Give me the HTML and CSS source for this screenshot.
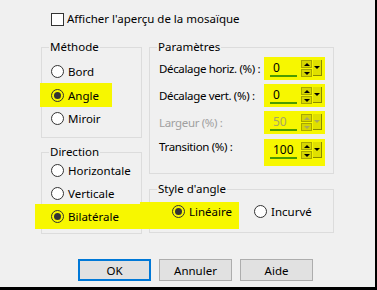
FILE: index.html
```html
<!DOCTYPE html>
<html lang="fr">
<head>
    <meta charset="UTF-8">
    <title>Mosaïque</title>
    <link rel="stylesheet" href="styles.css">
</head>
<body>
    <div class="dialog">
        <div class="check-row"><span class="checkbox"></span>Afficher l'aperçu de la mosaïque</div>

        <div class="main">
            <div class="col">
                <fieldset class="group methode">
                    <legend>Méthode</legend>
                    <div class="radio-row"><span class="radio"></span>Bord</div>
                    <div class="radio-row hl hl-angle"><span class="radio on"></span>Angle</div>
                    <div class="radio-row"><span class="radio"></span>Miroir</div>
                </fieldset>
                <fieldset class="group direction">
                    <legend>Direction</legend>
                    <div class="radio-row"><span class="radio"></span>Horizontale</div>
                    <div class="radio-row"><span class="radio"></span>Verticale</div>
                    <div class="radio-row hl hl-bilat"><span class="radio on"></span>Bilatérale</div>
                </fieldset>
            </div>

            <div class="col">
                <fieldset class="group params">
                    <legend>Paramètres</legend>
                    <div class="param-row">
                        <span class="label">Décalage horiz. (%) :</span>
                        <div class="spin">
                            <div class="field"><span class="value">0</span><span class="bar"></span></div>
                            <div class="arrows"><span class="arr up"></span><span class="arr down"></span></div>
                            <div class="drop"><span class="tri"></span></div>
                        </div>
                    </div>
                    <div class="param-row">
                        <span class="label">Décalage vert. (%) :</span>
                        <div class="spin">
                            <div class="field"><span class="value">0</span><span class="bar"></span></div>
                            <div class="arrows"><span class="arr up"></span><span class="arr down"></span></div>
                            <div class="drop"><span class="tri"></span></div>
                        </div>
                    </div>
                    <div class="param-row disabled">
                        <span class="label">Largeur (%) :</span>
                        <div class="spin">
                            <div class="field"><span class="value">50</span><span class="bar"></span></div>
                            <div class="arrows"><span class="arr up"></span><span class="arr down"></span></div>
                            <div class="drop"><span class="tri"></span></div>
                        </div>
                    </div>
                    <div class="param-row last">
                        <span class="label">Transition (%) :</span>
                        <div class="spin tall">
                            <div class="field"><span class="value">100</span><span class="bar"></span></div>
                            <div class="arrows"><span class="arr up"></span><span class="arr down"></span></div>
                            <div class="drop"><span class="tri"></span></div>
                        </div>
                    </div>
                </fieldset>
                <fieldset class="group style">
                    <legend>Style d'angle</legend>
                    <div class="style-row">
                        <div class="radio-row hl hl-lin"><span class="radio on"></span>Linéaire</div>
                        <div class="radio-row incurve"><span class="radio"></span>Incurvé</div>
                    </div>
                </fieldset>
            </div>
        </div>

        <div class="buttons">
            <button class="btn default">OK</button>
            <button class="btn">Annuler</button>
            <button class="btn">Aide</button>
        </div>
    </div>
</body>
</html>
```

FILE: styles.css
```css
* {
    box-sizing: border-box;
}
body {
    margin: 0;
    width: 377px;
    height: 290px;
    overflow: hidden;
    font-family: 'Noto Sans', 'DejaVu Sans', sans-serif;
    font-size: 11.5px;
    color: #000;
    background-color: #f0f0f0;
}
.dialog {
    height: 290px;
    border-right: 2px solid #000;
    border-bottom: 3px solid #000;
    padding-top: 12px;
    display: flex;
    flex-direction: column;
}

/* top checkbox */
.check-row {
    display: flex;
    align-items: center;
    gap: 3px;
    height: 14px;
    line-height: 14px;
    padding-left: 51px;
}
.checkbox {
    width: 13px;
    height: 13px;
    border: 1px solid #333;
    background: #fff;
}

/* two columns of group boxes */
.main {
    display: grid;
    grid-template-columns: 101px 185px;
    column-gap: 7px;
    margin: 14px 0 0 41px;
}
.col {
    display: flex;
    flex-direction: column;
}
.group {
    margin: 0;
    border: 1px solid #dcdcdc;
    padding: 0 0 0 9px;
    min-width: 0;
}
.group legend {
    margin-left: -2px;
    padding: 0 1px;
    line-height: 14px;
}
.methode {
    height: 98px;
    padding-top: 6px;
}
.direction {
    height: 89px;
    margin-top: 7px;
}
.params {
    height: 134px;
    padding: 3px 8px 0 9px;
}
.style {
    height: 51px;
    margin-top: 8px;
    padding-top: 6px;
}

/* radio buttons */
.radio-row {
    display: flex;
    align-items: center;
    gap: 4px;
    height: 23px;
    white-space: nowrap;
}
.radio {
    width: 13px;
    height: 13px;
    border: 1px solid #333;
    border-radius: 50%;
    background: #fff;
    display: flex;
    align-items: center;
    justify-content: center;
    flex: none;
}
.radio.on::after {
    content: '';
    width: 7px;
    height: 7px;
    border-radius: 50%;
    background: #333;
}

/* yellow highlighter marks */
.hl {
    background: #f7f700;
}
.hl .radio {
    background: transparent;
}
.hl-angle {
    margin-left: -11px;
    padding-left: 11px;
    width: 72px;
    height: 24px;
}
.hl-bilat {
    margin: -1px 0 0 -16px;
    padding-left: 16px;
    width: 107px;
    height: 25px;
}
.style-row {
    display: flex;
    align-items: flex-start;
}
.hl-lin {
    margin-left: -19px;
    padding-left: 32px;
    width: 99px;
    height: 27px;
    padding-bottom: 8px;
}
.incurve {
    margin-left: 15px;
    height: 19px;
}

/* parameter spinners */
.param-row {
    display: flex;
    justify-content: space-between;
    align-items: center;
    margin-bottom: 4px;
}
.param-row.last {
    margin-top: 5px;
    align-items: flex-start;
}
.param-row.last .label {
    padding-top: 1px;
}
.label {
    line-height: 14px;
    white-space: nowrap;
    letter-spacing: -0.35px;
}
.spin {
    display: flex;
    gap: 1px;
    padding: 3px;
    background: #f7f700;
    flex: none;
}
.spin.tall {
    padding-bottom: 7px;
}
.field {
    width: 33px;
    height: 17px;
    display: flex;
    flex-direction: column;
}
.value {
    padding-left: 6px;
    line-height: 15px;
    height: 15px;
    font-size: 12px;
}
.bar {
    height: 2px;
    margin: 0 3px;
    background: #4b9b00;
}
.arrows {
    width: 11px;
    display: flex;
    flex-direction: column;
    gap: 1px;
}
.arr {
    height: 8px;
    background: #d6d600;
    border: 1px solid #a8a800;
    display: flex;
    align-items: center;
    justify-content: center;
}
.arr::after {
    content: '';
    border-left: 3px solid transparent;
    border-right: 3px solid transparent;
}
.arr.up::after {
    border-bottom: 3px solid #000;
}
.arr.down::after {
    border-top: 3px solid #000;
}
.drop {
    width: 9px;
    height: 16px;
    background: #e0e000;
    border-right: 1px solid #8a8a00;
    border-bottom: 1px solid #8a8a00;
    display: flex;
    align-items: center;
    justify-content: center;
}
.tri {
    border-left: 3px solid transparent;
    border-right: 3px solid transparent;
    border-top: 3px solid #000;
}
.disabled .label {
    color: #a0a0a0;
}
.disabled .value {
    color: #a8a860;
}
.disabled .arr.up::after {
    border-bottom-color: #a8a860;
}
.disabled .arr.down::after {
    border-top-color: #a8a860;
}
.disabled .tri {
    border-top-color: #a8a860;
}

/* bottom buttons */
.buttons {
    display: flex;
    gap: 8px;
    margin: 25px 0 0 78px;
}
.btn {
    width: 73px;
    height: 22px;
    padding: 0;
    font-family: inherit;
    font-size: 11.5px;
    color: #000;
    background: #e1e1e1;
    border: 1px solid #adadad;
}
.btn.default {
    border: 2px solid #0078d7;
}
```
